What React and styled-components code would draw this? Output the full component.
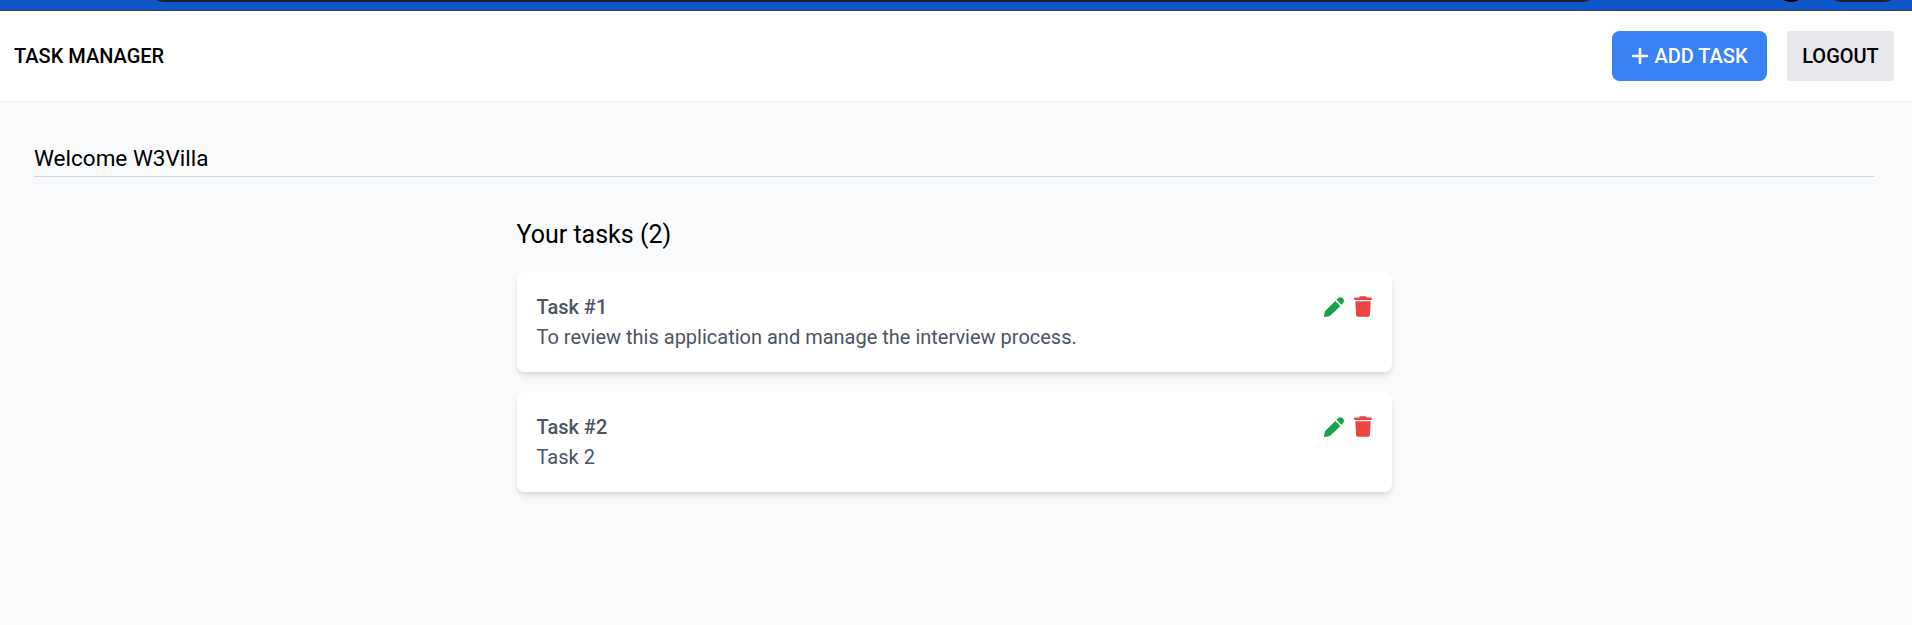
import React from "react";
import styled, { createGlobalStyle } from "styled-components";
import { FaTrash } from "react-icons/fa6";

const GlobalStyle = createGlobalStyle`
  *, *::before, *::after { box-sizing: border-box; }
  html, body { height: 100%; }
  body {
    margin: 0;
    overflow: hidden;
    background: #f9fafb;
    color: #000;
    font: 400 20px/30px Roboto, sans-serif;
  }
  h1, h2, h3, p, ul { margin: 0; padding: 0; font-weight: inherit; font-size: inherit; list-style: none; }
  button { font: inherit; color: inherit; border: 0; cursor: pointer; padding: 0; background: none; }
`;

const Chrome = styled.div`
  position: relative;
  height: 11px;
  overflow: hidden;
  background: #0f57c8;
  border-bottom: 1px solid #3b3f4a;
`;

const ChromePill = styled.div`
  position: absolute;
  left: ${(p) => p.$left}px;
  width: ${(p) => p.$width}px;
  top: -30px;
  height: 32px;
  border-radius: 16px;
  background: ${(p) => p.$color || "#202124"};
`;

const Header = styled.header`
  display: flex;
  align-items: center;
  justify-content: space-between;
  height: 90px;
  padding: 0 18px 0 14px;
  background: #fff;
  box-shadow: 0 1px 2px rgba(0, 0, 0, 0.05);
`;

const Brand = styled.h1`
  font-weight: 500;
`;

const Actions = styled.nav`
  display: flex;
  gap: 20px;
`;

const AddButton = styled.button`
  display: flex;
  align-items: center;
  justify-content: center;
  gap: 5px;
  width: 155px;
  height: 50px;
  border-radius: 7.5px;
  background: #3b82f6;
  color: #fff;
  font-weight: 500;
`;

const LogoutButton = styled.button`
  width: 107px;
  height: 50px;
  border-radius: 2.5px;
  background: #e5e7eb;
  font-weight: 500;
`;

const Main = styled.main`
  padding: 40px 38px 0 34px;
`;

const Welcome = styled.h2`
  height: 36px;
  border-bottom: 1px solid #d1d5db;
  font-size: 22.5px;
  line-height: 35px;
`;

const Tasks = styled.section`
  width: 875px;
  margin: 40px auto 0;
`;

const TasksTitle = styled.h2`
  margin-bottom: 20px;
  font-size: 25px;
  line-height: 35px;
`;

const TaskList = styled.ul`
  display: flex;
  flex-direction: column;
  gap: 20px;
`;

const TaskCard = styled.li`
  height: 100px;
  padding: 20px;
  border-radius: 7.5px;
  background: #fff;
  color: #4b5563;
  box-shadow: 0 5px 7.5px -1px rgba(0, 0, 0, 0.1), 0 2.5px 5px -2.5px rgba(0, 0, 0, 0.1);
`;

const TaskHead = styled.div`
  display: flex;
  justify-content: space-between;
  height: 30px;
`;

const TaskName = styled.h3`
  font-weight: 500;
`;

const TaskTools = styled.div`
  display: flex;
  align-items: center;
  gap: 10px;
  padding-bottom: 1px;
`;

const IconButton = styled.button`
  display: flex;
  color: ${(p) => p.$color};
`;

const TrashIcon = styled(FaTrash)`
  width: 18px;
  height: 21px;
`;

const PlusIcon = () => (
  <svg width="18" height="18" viewBox="0 0 18 18" fill="none" stroke="currentColor" strokeWidth="2.6" strokeLinecap="round">
    <path d="M9 2v14M2 9h14" />
  </svg>
);

const PenIcon = () => (
  <svg width="20" height="20" viewBox="0 0 20 20" fill="currentColor">
    <path d="M11.3 3.9 16.4 9 6.5 18.6Q4.6 19.8 2.2 19.8L0 20 .3 17.2Q.5 15 1.7 13.4ZM12.4 2.8 14.3 1.1Q16.5-.7 18.8 1.3 20.9 3.4 19.2 5.8L17.5 7.8Z" />
  </svg>
);

const tasks = [
  { name: "Task #1", text: "To review this application and manage the interview process." },
  { name: "Task #2", text: "Task 2" },
];

export default function App() {
  return (
    <>
      <GlobalStyle />
      <Chrome>
        <ChromePill $left={148} $width={1450} />
        <ChromePill $left={1775} $width={32} $color="#000" />
        <ChromePill $left={1826} $width={74} />
      </Chrome>
      <Header>
        <Brand>TASK MANAGER</Brand>
        <Actions>
          <AddButton><PlusIcon />ADD TASK</AddButton>
          <LogoutButton>LOGOUT</LogoutButton>
        </Actions>
      </Header>
      <Main>
        <Welcome>Welcome W3Villa</Welcome>
        <Tasks>
          <TasksTitle>Your tasks ({tasks.length})</TasksTitle>
          <TaskList>
            {tasks.map((task) => (
              <TaskCard key={task.name}>
                <TaskHead>
                  <TaskName>{task.name}</TaskName>
                  <TaskTools>
                    <IconButton $color="#16a34a" aria-label="Edit"><PenIcon /></IconButton>
                    <IconButton $color="#ef4444" aria-label="Delete"><TrashIcon /></IconButton>
                  </TaskTools>
                </TaskHead>
                <p>{task.text}</p>
              </TaskCard>
            ))}
          </TaskList>
        </Tasks>
      </Main>
    </>
  );
}
